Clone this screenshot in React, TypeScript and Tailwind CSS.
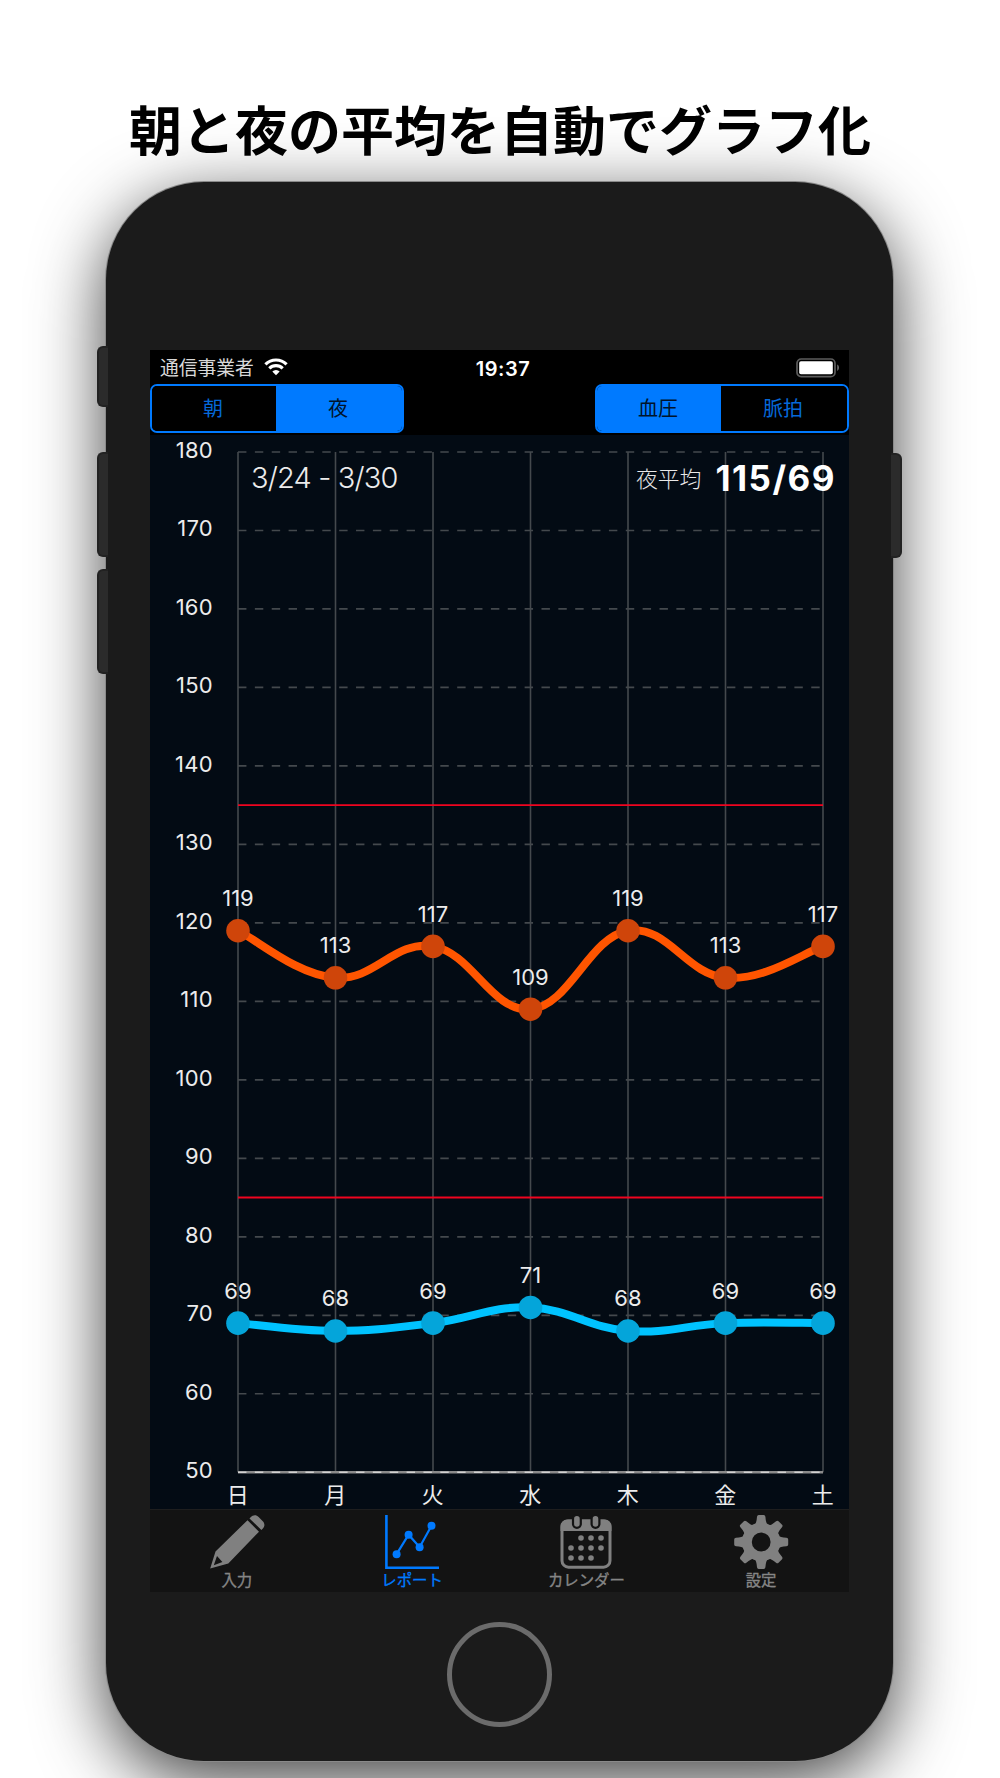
import { ReactNode } from "react";

interface Series {
  name: string;
  values: number[];
  line: string;
  dot: string;
}

interface Tab {
  label: string;
  icon: ReactNode;
  active?: boolean;
}

const DAYS = ["日", "月", "火", "水", "木", "金", "土"];
const TICKS = [180, 170, 160, 150, 140, 130, 120, 110, 100, 90, 80, 70, 60, 50];
const LIMITS = [135, 85];

const SERIES: Series[] = [
  {
    name: "systolic",
    values: [119, 113, 117, 109, 119, 113, 117],
    line: "#ff5500",
    dot: "#cf450a",
  },
  {
    name: "diastolic",
    values: [69, 68, 69, 71, 68, 69, 69],
    line: "#00c3ff",
    dot: "#04a5da",
  },
];

const LEFT = 88;
const TOP = 17;
const STEP_X = 97.5;
const STEP_Y = 78.48;
const RIGHT = LEFT + STEP_X * 6;
const BOTTOM = TOP + STEP_Y * 13;

const xAt = (index: number) => LEFT + index * STEP_X;
const yAt = (value: number) => TOP + ((180 - value) / 10) * STEP_Y;

// Cubic line through every point, tangents taken from the neighbours
function smoothPath(values: number[]) {
  const k = 0.2;
  const last = values.length - 1;
  const pts = values.map((v, i) => [xAt(i), yAt(v)]);
  let d = `M${pts[0][0]} ${pts[0][1]}`;
  for (let i = 1; i <= last; i++) {
    const before = pts[Math.max(i - 2, 0)];
    const prev = pts[i - 1];
    const cur = pts[i];
    const next = pts[Math.min(i + 1, last)];
    const c1 = [prev[0] + (cur[0] - before[0]) * k, prev[1] + (cur[1] - before[1]) * k];
    const c2 = [cur[0] - (next[0] - prev[0]) * k, cur[1] - (next[1] - prev[1]) * k];
    d += ` C${c1[0]} ${c1[1]} ${c2[0]} ${c2[1]} ${cur[0]} ${cur[1]}`;
  }
  return d;
}

function Chart() {
  return (
    <svg width="699" height="1074" viewBox="0 0 699 1074" className="block">
      {TICKS.map((tick) => (
        <g key={tick}>
          <line
            x1={LEFT}
            x2={RIGHT}
            y1={yAt(tick)}
            y2={yAt(tick)}
            stroke="#44494d"
            strokeWidth="1.7"
            strokeDasharray="8.43 8.43"
          />
          <text
            x="63"
            y={yAt(tick) + 5.8}
            textAnchor="end"
            fontSize="22"
            letterSpacing="0.3"
            className="fill-[#ececec]"
          >
            {tick}
          </text>
        </g>
      ))}
      {DAYS.map((day, i) => (
        <g key={day}>
          <line
            x1={xAt(i)}
            x2={xAt(i)}
            y1={TOP}
            y2={BOTTOM}
            stroke="#44494d"
            strokeWidth="1.6"
          />
          <text
            x={xAt(i) - 0.3}
            y="1067.5"
            textAnchor="middle"
            fontSize="22"
            className="fill-[#ececec]"
          >
            {day}
          </text>
        </g>
      ))}
      <line x1={LEFT} x2={RIGHT} y1={BOTTOM} y2={BOTTOM} stroke="#8b8b8b" strokeWidth="2.4" />
      <line
        x1={LEFT}
        x2={RIGHT}
        y1={BOTTOM}
        y2={BOTTOM}
        stroke="#d2d2d2"
        strokeWidth="1.4"
        strokeDasharray="8.43 8.43"
      />
      {LIMITS.map((limit) => (
        <line
          key={limit}
          x1={LEFT}
          x2={RIGHT}
          y1={yAt(limit)}
          y2={yAt(limit)}
          stroke="#f0041f"
          strokeWidth="1.9"
        />
      ))}
      {SERIES.map((series) => (
        <g key={series.name}>
          <path d={smoothPath(series.values)} fill="none" stroke={series.line} strokeWidth="8" />
          {series.values.map((value, i) => (
            <g key={i}>
              <circle cx={xAt(i)} cy={yAt(value)} r="11.8" fill={series.dot} />
              <text
                x={xAt(i)}
                y={yAt(value) - 24.5}
                textAnchor="middle"
                fontSize="22"
                className="fill-[#ececec]"
              >
                {value}
              </text>
            </g>
          ))}
        </g>
      ))}
    </svg>
  );
}

function WifiIcon() {
  return (
    <svg width="24" height="18" viewBox="0 0 24 18" className="block">
      <g fill="none" stroke="#fff" strokeWidth="3.1">
        <path d="M1.4 6.4a15 15 0 0 1 21.2 0" />
        <path d="M5.3 10.4a9.5 9.5 0 0 1 13.4 0" />
      </g>
      <path d="M12 17.2l-3.7-3.8a5.3 5.3 0 0 1 7.4 0z" fill="#fff" />
    </svg>
  );
}

function BatteryIcon() {
  return (
    <svg width="44" height="20" viewBox="0 0 44 20" className="block">
      <rect x="1" y="1" width="38" height="17.6" rx="4.2" fill="none" stroke="#5c5c5c" strokeWidth="1.7" />
      <rect x="3.2" y="3.3" width="33.6" height="13" rx="1.8" fill="#fff" />
      <path d="M41.2 6.6c2.4 1.2 2.4 5.2 0 6.4z" fill="#6b6b6b" />
    </svg>
  );
}

function PencilIcon() {
  return (
    <svg width="56" height="56" viewBox="0 0 56 56" className="block" fill="#808080">
      <path d="M38.5 6.2L50 17.7 19.3 49.4 1.2 54.6 6.5 37.5zM8 42l-3.2 9.3L13.4 48z" fillRule="evenodd" />
      <path d="M41.4 3.6c2.8-2.9 5.8-2.9 8.2-.5l4.2 4.2c2.2 2.4 2.2 5-.4 7.7l-1 1L40.5 4.4z" />
    </svg>
  );
}

function ReportIcon() {
  return (
    <svg width="56" height="56" viewBox="0 0 56 56" className="block">
      <path d="M2.4 1v52.7H55" fill="none" stroke="#007aff" strokeWidth="2.6" />
      <path d="M12.6 40.2L24.6 20.7 35.6 33.2 47.5 11.8" fill="none" stroke="#007aff" strokeWidth="2.2" />
      <g fill="#007aff">
        <circle cx="12.6" cy="40.2" r="4" />
        <circle cx="24.6" cy="20.7" r="4" />
        <circle cx="35.6" cy="33.2" r="4" />
        <circle cx="47.5" cy="11.8" r="4" />
      </g>
    </svg>
  );
}

function CalendarIcon() {
  const dots = [
    [24, 24], [34, 24], [44, 24],
    [14, 34], [24, 34], [34, 34], [44, 34],
    [14, 44], [24, 44], [34, 44],
  ];
  return (
    <svg width="56" height="56" viewBox="2 0 56 56" className="block">
      <rect x="5" y="7" width="48" height="46.2" rx="6.5" fill="none" stroke="#808080" strokeWidth="3" />
      <path d="M3.5 17V12a6.5 6.5 0 0 1 6.5-6.5h38a6.5 6.5 0 0 1 6.5 6.5v5z" fill="#808080" />
      <g stroke="#131313" strokeWidth="2.2" fill="#808080">
        <rect x="16" y="1" width="7.8" height="12.8" rx="3.9" />
        <rect x="34.6" y="1" width="7.8" height="12.8" rx="3.9" />
      </g>
      {dots.map(([cx, cy]) => (
        <circle key={`${cx}-${cy}`} cx={cx} cy={cy} r="2.8" fill="#808080" />
      ))}
    </svg>
  );
}

function GearIcon() {
  return (
    <svg width="56" height="56" viewBox="-27.2 -28 56 56" className="block">
      <circle r="14.3" fill="none" stroke="#808080" strokeWidth="9.8" />
      {[0, 45, 90, 135, 180, 225, 270, 315].map((angle) => (
        <path
          key={angle}
          d="M-6.8-16.5Q-4.6-19-4.2-25.2Q-4-27-2.5-27H2.5Q4-27 4.2-25.2Q4.6-19 6.8-16.5z"
          fill="#808080"
          transform={`rotate(${angle})`}
        />
      ))}
    </svg>
  );
}

const TABS: Tab[] = [
  { label: "入力", icon: <PencilIcon /> },
  { label: "レポート", icon: <ReportIcon />, active: true },
  { label: "カレンダー", icon: <CalendarIcon /> },
  { label: "設定", icon: <GearIcon /> },
];

function Segmented({ items, selected }: { items: string[]; selected: number }) {
  return (
    <div className="grid h-[49px] w-[254px] grid-cols-[124px_1fr] overflow-hidden rounded-[7px] border-2 border-[#007aff] text-[20px]">
      {items.map((item, i) => (
        <button
          key={item}
          type="button"
          className={
            i === selected
              ? "bg-[#007aff] pr-[2px] text-[#00142b]"
              : "bg-black pr-[2px] text-[#0568d8]"
          }
        >
          {item}
        </button>
      ))}
    </div>
  );
}

function StatusBar() {
  return (
    <div className="grid h-[34px] grid-cols-3 items-center pr-[9px] pl-[10px] text-white">
      <div className="flex items-center gap-[10px]">
        <span className="pt-[4px] text-[18.8px] leading-none text-[#d8d8d8]">通信事業者</span>
        <WifiIcon />
      </div>
      <span className="pt-[3px] pl-[6px] text-center text-[20px] leading-none font-semibold tracking-[0.5px]">
        19:37
      </span>
      <div className="flex justify-end pt-px">
        <BatteryIcon />
      </div>
    </div>
  );
}

function TabBar() {
  return (
    <nav className="grid h-[83px] grid-cols-4 border-t border-[#1e1e1e] bg-[#131313]">
      {TABS.map((tab) => (
        <div key={tab.label} className="flex flex-col items-center pt-[4px]">
          {tab.icon}
          <span
            className={
              tab.active
                ? "mt-[3px] text-[15.4px] leading-[16px] text-[#007aff] [-webkit-text-stroke:0.35px]"
                : "mt-[3px] mr-px text-[15.4px] leading-[16px] text-[#858585] [-webkit-text-stroke:0.35px]"
            }
          >
            {tab.label}
          </span>
        </div>
      ))}
    </nav>
  );
}

function Screen() {
  return (
    <div className="flex h-[1242px] w-[699px] flex-col bg-black">
      <StatusBar />
      <div className="flex h-[51px] justify-between">
        <Segmented items={["朝", "夜"]} selected={1} />
        <Segmented items={["血圧", "脈拍"]} selected={0} />
      </div>
      <div className="relative bg-[#030b14]">
        <Chart />
        {/* Period and average float over the top of the plot */}
        <div className="absolute top-[22px] right-[13px] left-[101px] flex h-[42px] items-center justify-between">
          <span className="text-[29px] font-light tracking-[-0.85px] text-[#ececec]">3/24 - 3/30</span>
          <div className="flex items-center gap-[14px]">
            <span className="pt-[3px] text-[21.8px] font-light text-[#e8e8e8]">夜平均</span>
            <span className="text-[35px] font-bold tracking-[1.5px] text-white">115/69</span>
          </div>
        </div>
      </div>
      <TabBar />
    </div>
  );
}

export default function App() {
  return (
    <main className="flex h-[1778px] w-[1000px] flex-col items-center overflow-hidden bg-white font-[Inter,'Noto_Sans_CJK_JP',sans-serif]">
      <h1 className="relative z-10 mt-[92px] h-[90px] text-[53px] leading-[80px] font-bold whitespace-nowrap text-black">
        朝と夜の平均を自動でグラフ化
      </h1>
      <div className="relative mr-[1px] h-[1579px] w-[787px] shrink-0">
        <div className="flex h-full flex-col items-center rounded-[98px] bg-[#1b1b1b] pt-[168px] shadow-[0_0_0_1px_#8a8a8a,0_19px_70px_rgba(0,0,0,0.76)]">
          <Screen />
          <div className="mt-[30px] size-[105px] rounded-full border-[5px] border-[#6b6b6b]" />
        </div>
        {/* Side buttons, lapping two pixels onto the body */}
        <div className="absolute top-[164px] -left-[9px] h-[61px] w-[11px] rounded-l-[6px] border-2 border-r-0 border-[#222222] bg-[#2b2b2b]" />
        <div className="absolute top-[270px] -left-[9px] h-[105px] w-[11px] rounded-l-[6px] border-2 border-r-0 border-[#222222] bg-[#2b2b2b]" />
        <div className="absolute top-[387px] -left-[9px] h-[105px] w-[11px] rounded-l-[6px] border-2 border-r-0 border-[#222222] bg-[#2b2b2b]" />
        <div className="absolute top-[271px] -right-[9px] h-[105px] w-[11px] rounded-r-[6px] border-2 border-l-0 border-[#222222] bg-[#2b2b2b]" />
      </div>
    </main>
  );
}
